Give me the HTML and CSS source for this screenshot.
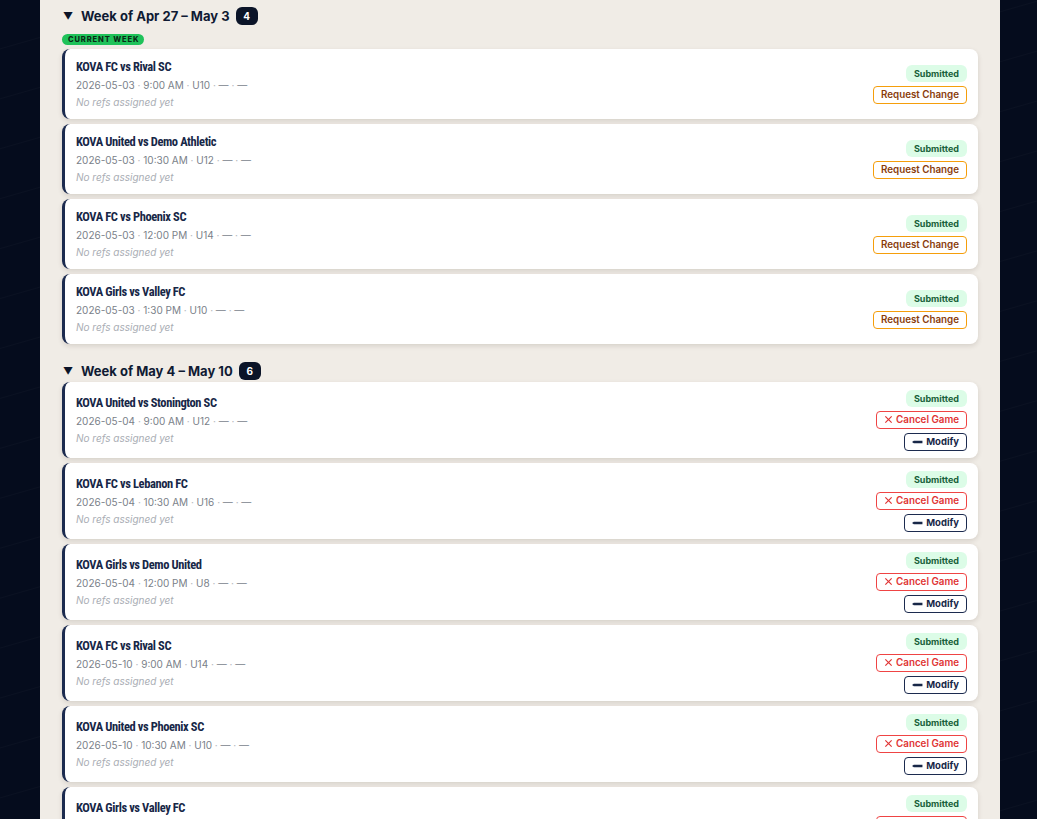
FILE: index.html
```html
<!DOCTYPE html>
<html lang="en">
<head>
    <meta charset="UTF-8">
    <meta name="viewport" content="width=device-width, initial-scale=1.0">
    <title>My Games</title>
    <link rel="stylesheet" href="styles.css">
</head>
<body>

    <div class="panel">
        <div class="week">
            <div class="week-head">
                <span class="caret">&#9660;</span>
                <span class="week-title">Week of Apr 27 &ndash; May 3</span>
                <span class="count">4</span>
            </div>
            <div class="current">CURRENT WEEK</div>
            <div class="games">
                <div class="game">
                    <div class="info">
                        <div class="title">KOVA FC vs Rival SC</div>
                        <div class="meta">2026-05-03 <i>&middot;</i> 9:00 AM <i>&middot;</i> U10 <i>&middot;</i> &mdash; <i>&middot;</i> &mdash;</div>
                        <div class="refs">No refs assigned yet</div>
                    </div>
                    <div class="actions">
                        <span class="status">Submitted</span>
                        <button class="btn btn-change">Request Change</button>
                    </div>
                </div>
                <div class="game">
                    <div class="info">
                        <div class="title">KOVA United vs Demo Athletic</div>
                        <div class="meta">2026-05-03 <i>&middot;</i> 10:30 AM <i>&middot;</i> U12 <i>&middot;</i> &mdash; <i>&middot;</i> &mdash;</div>
                        <div class="refs">No refs assigned yet</div>
                    </div>
                    <div class="actions">
                        <span class="status">Submitted</span>
                        <button class="btn btn-change">Request Change</button>
                    </div>
                </div>
                <div class="game">
                    <div class="info">
                        <div class="title">KOVA FC vs Phoenix SC</div>
                        <div class="meta">2026-05-03 <i>&middot;</i> 12:00 PM <i>&middot;</i> U14 <i>&middot;</i> &mdash; <i>&middot;</i> &mdash;</div>
                        <div class="refs">No refs assigned yet</div>
                    </div>
                    <div class="actions">
                        <span class="status">Submitted</span>
                        <button class="btn btn-change">Request Change</button>
                    </div>
                </div>
                <div class="game">
                    <div class="info">
                        <div class="title">KOVA Girls vs Valley FC</div>
                        <div class="meta">2026-05-03 <i>&middot;</i> 1:30 PM <i>&middot;</i> U10 <i>&middot;</i> &mdash; <i>&middot;</i> &mdash;</div>
                        <div class="refs">No refs assigned yet</div>
                    </div>
                    <div class="actions">
                        <span class="status">Submitted</span>
                        <button class="btn btn-change">Request Change</button>
                    </div>
                </div>
            </div>
        </div>

        <div class="week">
            <div class="week-head">
                <span class="caret">&#9660;</span>
                <span class="week-title">Week of May 4 &ndash; May 10</span>
                <span class="count">6</span>
            </div>
            <div class="games">
                <div class="game">
                    <div class="info">
                        <div class="title">KOVA United vs Stonington SC</div>
                        <div class="meta">2026-05-04 <i>&middot;</i> 9:00 AM <i>&middot;</i> U12 <i>&middot;</i> &mdash; <i>&middot;</i> &mdash;</div>
                        <div class="refs">No refs assigned yet</div>
                    </div>
                    <div class="actions">
                        <span class="status">Submitted</span>
                        <button class="btn btn-cancel"><svg viewBox="0 0 10 10"><path d="M1.5 1.5l7 7M8.5 1.5l-7 7"/></svg>Cancel Game</button>
                        <button class="btn btn-modify"><svg viewBox="0 0 12 4"><path d="M0 2L2 0.6H11.4V3.4H2Z"/></svg>Modify</button>
                    </div>
                </div>
                <div class="game">
                    <div class="info">
                        <div class="title">KOVA FC vs Lebanon FC</div>
                        <div class="meta">2026-05-04 <i>&middot;</i> 10:30 AM <i>&middot;</i> U16 <i>&middot;</i> &mdash; <i>&middot;</i> &mdash;</div>
                        <div class="refs">No refs assigned yet</div>
                    </div>
                    <div class="actions">
                        <span class="status">Submitted</span>
                        <button class="btn btn-cancel"><svg viewBox="0 0 10 10"><path d="M1.5 1.5l7 7M8.5 1.5l-7 7"/></svg>Cancel Game</button>
                        <button class="btn btn-modify"><svg viewBox="0 0 12 4"><path d="M0 2L2 0.6H11.4V3.4H2Z"/></svg>Modify</button>
                    </div>
                </div>
                <div class="game">
                    <div class="info">
                        <div class="title">KOVA Girls vs Demo United</div>
                        <div class="meta">2026-05-04 <i>&middot;</i> 12:00 PM <i>&middot;</i> U8 <i>&middot;</i> &mdash; <i>&middot;</i> &mdash;</div>
                        <div class="refs">No refs assigned yet</div>
                    </div>
                    <div class="actions">
                        <span class="status">Submitted</span>
                        <button class="btn btn-cancel"><svg viewBox="0 0 10 10"><path d="M1.5 1.5l7 7M8.5 1.5l-7 7"/></svg>Cancel Game</button>
                        <button class="btn btn-modify"><svg viewBox="0 0 12 4"><path d="M0 2L2 0.6H11.4V3.4H2Z"/></svg>Modify</button>
                    </div>
                </div>
                <div class="game">
                    <div class="info">
                        <div class="title">KOVA FC vs Rival SC</div>
                        <div class="meta">2026-05-10 <i>&middot;</i> 9:00 AM <i>&middot;</i> U14 <i>&middot;</i> &mdash; <i>&middot;</i> &mdash;</div>
                        <div class="refs">No refs assigned yet</div>
                    </div>
                    <div class="actions">
                        <span class="status">Submitted</span>
                        <button class="btn btn-cancel"><svg viewBox="0 0 10 10"><path d="M1.5 1.5l7 7M8.5 1.5l-7 7"/></svg>Cancel Game</button>
                        <button class="btn btn-modify"><svg viewBox="0 0 12 4"><path d="M0 2L2 0.6H11.4V3.4H2Z"/></svg>Modify</button>
                    </div>
                </div>
                <div class="game">
                    <div class="info">
                        <div class="title">KOVA United vs Phoenix SC</div>
                        <div class="meta">2026-05-10 <i>&middot;</i> 10:30 AM <i>&middot;</i> U10 <i>&middot;</i> &mdash; <i>&middot;</i> &mdash;</div>
                        <div class="refs">No refs assigned yet</div>
                    </div>
                    <div class="actions">
                        <span class="status">Submitted</span>
                        <button class="btn btn-cancel"><svg viewBox="0 0 10 10"><path d="M1.5 1.5l7 7M8.5 1.5l-7 7"/></svg>Cancel Game</button>
                        <button class="btn btn-modify"><svg viewBox="0 0 12 4"><path d="M0 2L2 0.6H11.4V3.4H2Z"/></svg>Modify</button>
                    </div>
                </div>
                <div class="game">
                    <div class="info">
                        <div class="title">KOVA Girls vs Valley FC</div>
                        <div class="meta">2026-05-10 <i>&middot;</i> 1:30 PM <i>&middot;</i> U12 <i>&middot;</i> &mdash; <i>&middot;</i> &mdash;</div>
                        <div class="refs">No refs assigned yet</div>
                    </div>
                    <div class="actions">
                        <span class="status">Submitted</span>
                        <button class="btn btn-cancel"><svg viewBox="0 0 10 10"><path d="M1.5 1.5l7 7M8.5 1.5l-7 7"/></svg>Cancel Game</button>
                        <button class="btn btn-modify"><svg viewBox="0 0 12 4"><path d="M0 2L2 0.6H11.4V3.4H2Z"/></svg>Modify</button>
                    </div>
                </div>
            </div>
        </div>
    </div>

</body>
</html>
```

FILE: styles.css
```css
html, body {
    height: 100%;
    overflow: hidden;
}
body {
    margin: 0;
    font-family: Inter, "Noto Sans", sans-serif;
    background-color: #050c1d;
    background-image: repeating-linear-gradient(164deg, transparent 0, transparent 46px, rgba(255,255,255,0.025) 47px, transparent 48px);
}
.panel {
    width: 960px;
    margin-left: 40px;
    min-height: 100%;
    box-sizing: border-box;
    padding: 7px 22px 0;
    background: #f0ece6;
}
.week {
    margin-bottom: 18px;
}
.week-head {
    display: flex;
    align-items: center;
    height: 18px;
    margin-bottom: 2px;
}
.caret {
    font-size: 10px;
    color: #0b1428;
    width: 18px;
    padding-left: 1px;
}
.week-title {
    font-size: 13px;
    font-weight: 700;
    color: #0f1a33;
}
.count {
    margin-left: 6px;
    background: #0b1428;
    color: #fff;
    font-size: 10px;
    font-weight: 700;
    height: 18px;
    min-width: 22px;
    border-radius: 6px;
    display: flex;
    align-items: center;
    justify-content: center;
}
.current {
    width: fit-content;
    margin: 9px 0 4px;
    background: #1fc25a;
    color: #0a2a16;
    font-size: 7.5px;
    font-weight: 800;
    letter-spacing: 0.9px;
    line-height: 11px;
    padding: 0 5px 0 6px;
    border-radius: 6px;
}
.games {
    display: flex;
    flex-direction: column;
    gap: 5px;
}
.game {
    display: flex;
    align-items: center;
    justify-content: space-between;
    min-height: 70px;
    box-sizing: border-box;
    padding: 7.5px 11px;
    background: #fff;
    border-left: 3px solid #1c2b4f;
    border-radius: 8px;
    box-shadow: 0 2px 5px rgba(60,45,30,0.14);
}
.title {
    font-family: "Liberation Sans Narrow", "Roboto", sans-serif;
    font-stretch: condensed;
    font-size: 12.5px;
    font-weight: 700;
    letter-spacing: -0.4px;
    color: #172747;
    line-height: 16px;
}
.meta {
    margin-top: 3px;
    font-size: 10px;
    line-height: 14px;
    color: #7a7f89;
}
.meta i {
    font-style: normal;
    color: #b4b7bd;
}
.refs {
    margin-top: 3px;
    font-size: 10px;
    line-height: 14px;
    font-style: italic;
    color: #a9adb4;
}
.actions {
    display: flex;
    flex-direction: column;
    align-items: flex-end;
    gap: 4px;
}
.status {
    background: #dcfce7;
    color: #19613a;
    font-size: 9px;
    font-weight: 700;
    line-height: 17px;
    padding: 0 8px;
    border-radius: 6px;
}
.btn {
    font-family: inherit;
    display: flex;
    align-items: center;
    gap: 3px;
    height: 18px;
    box-sizing: border-box;
    padding: 0 7px;
    background: #fff;
    border-radius: 4px;
    font-size: 9.5px;
    font-weight: 600;
    cursor: pointer;
}
.btn-change {
    border: 1px solid #f59e0b;
    color: #8a3d0c;
    font-size: 9.8px;
}
.btn-cancel {
    border: 1px solid #ef4444;
    color: #e03434;
    font-size: 9.8px;
}
.btn-cancel svg {
    width: 9px;
    height: 9px;
    stroke: #e03434;
    stroke-width: 1.3;
    fill: none;
}
.btn-modify {
    border: 1px solid #1c2b4f;
    color: #172747;
    font-weight: 700;
}
.btn-modify svg {
    width: 11px;
    height: 4px;
    fill: #172747;
}
```
